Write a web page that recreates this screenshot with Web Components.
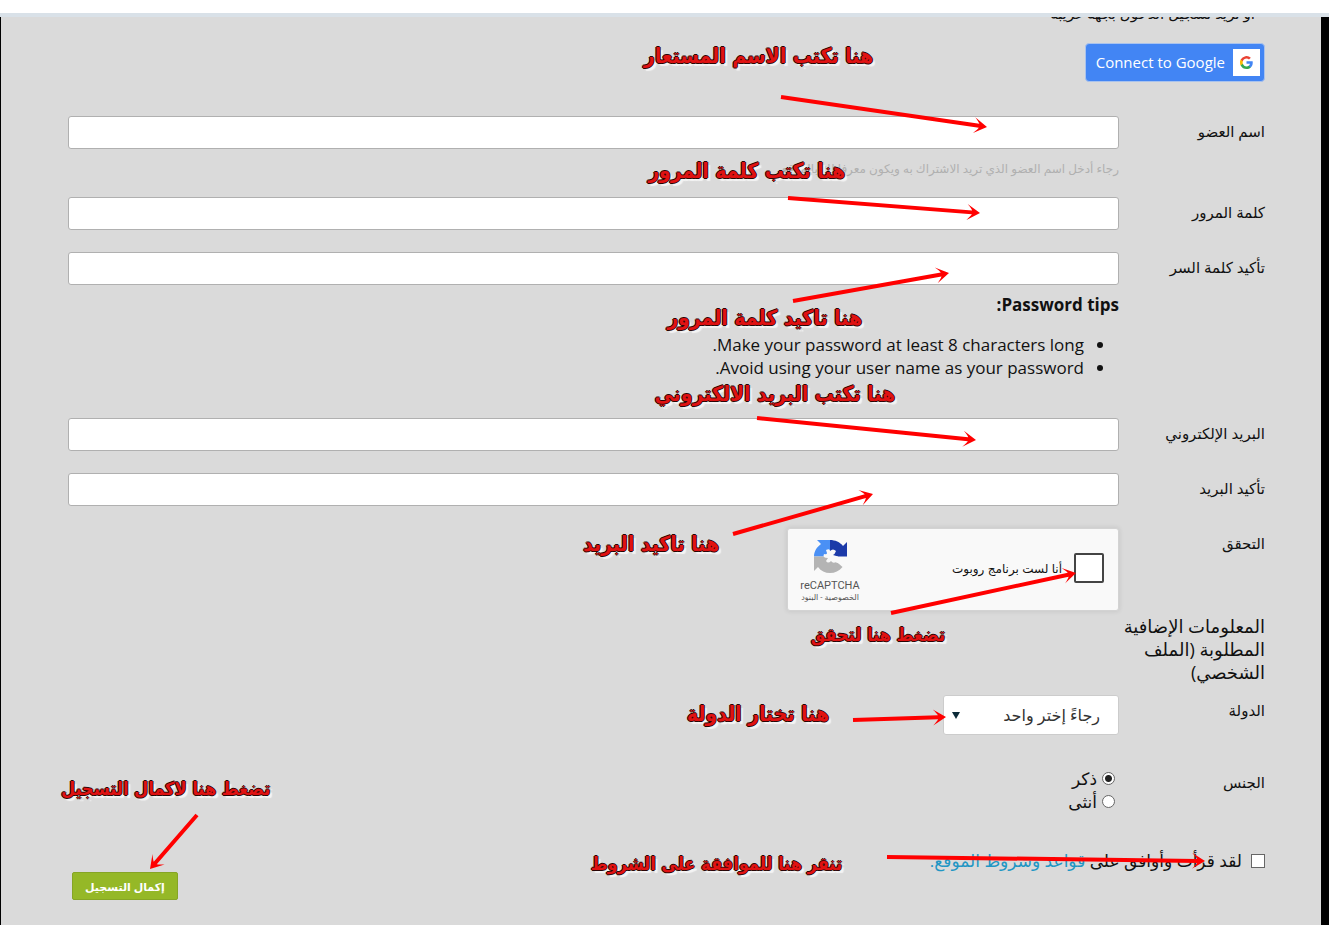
<!DOCTYPE html>
<html lang="ar" dir="rtl">
<head>
<meta charset="utf-8">
<meta name="viewport" content="width=device-width, initial-scale=1">
<title>التسجيل</title>
<style>
    body {
        margin: 0;
        background: white;
        color: #111;
        font-family: "Open Sans", "DejaVu Sans", sans-serif;
        font-size: 17px;
        line-height: 23px;
    }
</style>
</head>
<body>
<page-frame>
    <register-form></register-form>
    <guide-layer slot="guides">
        <guide-note style="top: 42px; right: 456px">هنا تكتب الاسم المستعار</guide-note>
        <guide-note style="top: 157px; right: 484px">هنا تكتب كلمة المرور</guide-note>
        <guide-note style="top: 304px; right: 467px">هنا تاكيد كلمة المرور</guide-note>
        <guide-note style="top: 380px; right: 434px">هنا تكتب البريد الالكتروني</guide-note>
        <guide-note style="top: 530px; right: 610px">هنا تاكيد البريد</guide-note>
        <guide-note compact style="top: 621px; right: 384px">تضغط هنا لتحقق</guide-note>
        <guide-note style="top: 700px; right: 500px">هنا تختار الدولة</guide-note>
        <guide-note compact style="top: 850px; right: 487px">تنقر هنا للموافقة على الشروط</guide-note>
        <guide-note compact style="top: 775px; left: 61px">تضغط هنا لاكمال التسجيل</guide-note>
    </guide-layer>
</page-frame>

<script>
class PageFrame extends HTMLElement {
    constructor() {
        super();
        this.attachShadow({mode: "open"}).innerHTML = `
            <style>
                :host {
                    display: flex;
                    flex-direction: column;
                    position: relative;
                    min-height: 100vh;
                    overflow: hidden;
                }

                .strip {
                    height: 13px;
                    border-bottom: 4px solid #d9e1e8;
                }

                main {
                    flex: 1;
                    background: #dadada;
                    border-left: 1px solid black;
                    border-right: 8px solid black;
                }
            </style>
            <div class="strip"></div>
            <main><slot></slot></main>
            <slot name="guides"></slot>
        `;
    }
}
customElements.define("page-frame", PageFrame);

class FormRow extends HTMLElement {
    constructor() {
        super();
        this.attachShadow({mode: "open"}).innerHTML = `
            <style>
                :host {
                    display: grid;
                    grid-template-columns: 146px minmax(0, 1fr);
                    align-items: start;
                    margin-bottom: 22px;
                }

                .label {
                    font-size: 15px;
                    line-height: 31px;
                }
            </style>
            <div class="label"><slot name="label"></slot></div>
            <div><slot></slot></div>
        `;
    }
}
customElements.define("form-row", FormRow);

class GoogleButton extends HTMLElement {
    constructor() {
        super();
        this.attachShadow({mode: "open"}).innerHTML = `
            <style>
                :host {
                    display: inline-flex;
                }

                button {
                    display: flex;
                    align-items: center;
                    gap: 8px;
                    height: 39px;
                    padding: 0 4px 0 10px;
                    border: 1px solid #a9c3ee;
                    border-radius: 4px;
                    background: #4285f4;
                    color: white;
                    font: inherit;
                    font-size: 15px;
                    cursor: pointer;
                }

                .logo {
                    display: grid;
                    place-items: center;
                    width: 27px;
                    height: 27px;
                    background: white;
                }
            </style>
            <button type="button">
                <span class="logo">
                    <svg width="13" height="13" viewBox="0 0 18 18" aria-hidden="true">
                        <path fill="#4285f4" d="M17.64 9.2c0-.64-.06-1.25-.16-1.84H9v3.48h4.84a4.14 4.14 0 0 1-1.8 2.72v2.26h2.92c1.7-1.57 2.68-3.88 2.68-6.62z"/>
                        <path fill="#34a853" d="M9 18c2.43 0 4.47-.8 5.96-2.18l-2.92-2.26c-.8.54-1.84.86-3.04.86-2.34 0-4.33-1.58-5.04-3.71H.96v2.33A9 9 0 0 0 9 18z"/>
                        <path fill="#fbbc05" d="M3.96 10.71a5.4 5.4 0 0 1 0-3.42V4.96H.96a9 9 0 0 0 0 8.08l3-2.33z"/>
                        <path fill="#ea4335" d="M9 3.58c1.32 0 2.5.45 3.44 1.35l2.58-2.59A9 9 0 0 0 .96 4.96l3 2.33C4.67 5.16 6.66 3.58 9 3.58z"/>
                    </svg>
                </span>
                <slot></slot>
            </button>
        `;
    }
}
customElements.define("google-button", GoogleButton);

class RobotCheck extends HTMLElement {
    constructor() {
        super();
        this.attachShadow({mode: "open"}).innerHTML = `
            <style>
                :host {
                    display: flex;
                    align-items: center;
                    box-sizing: border-box;
                    width: 332px;
                    max-width: 100%;
                    height: 83px;
                    padding: 0 14px 0 12px;
                    border: 1px solid #d3d3d3;
                    border-radius: 3px;
                    background: #f9f9f9;
                    box-shadow: 0 0 4px 1px rgba(0,0,0,0.08);
                }

                input {
                    appearance: none;
                    width: 30px;
                    height: 30px;
                    margin: 0 0 4px 12px;
                    border: 2px solid #444;
                    border-radius: 2px;
                    background: white;
                }

                label {
                    flex: 1;
                    font-family: "Liberation Sans", "DejaVu Sans", sans-serif;
                    font-size: 12px;
                }

                .brand {
                    display: flex;
                    flex-direction: column;
                    align-items: center;
                    width: 60px;
                    padding-top: 4px;
                    font-family: Roboto, "DejaVu Sans", sans-serif;
                    font-size: 11px;
                    line-height: 12px;
                    color: #555;
                }

                svg {
                    margin-bottom: 7px;
                }

                small {
                    font-size: 8px;
                    white-space: nowrap;
                }
            </style>
            <input type="checkbox" id="robot">
            <label for="robot">أنا لست برنامج روبوت</label>
            <div class="brand">
                <svg width="33" height="33" viewBox="0 0 33 33" aria-hidden="true">
                    <path fill="#4a90f5" d="M16 0H3l4 4C3 7 0 11 0 16.500H16z"/>
                    <path fill="#1c3aa9" d="M16 0C21 0 26 2 29 6l4-4V16.500H16z"/>
                    <path fill="#b4b4b4" d="M0 16.500H15L18 21 24 23 28.500 27C25 31 21 33 16 33 11 33 7 31 4 27L0 31z"/>
                    <path fill="#f9f9f9" d="M12 10Q16 8 16 11Q19 8 22 11Q21 14 19 15L24 16.500 26 24 22 22Q19 24 17 21Q14 24 12 21L14 18Q8 18 10 14Q13 15 13 13z"/>
                </svg>
                <span>reCAPTCHA</span>
                <small>الخصوصية - البنود</small>
            </div>
        `;
    }
}
customElements.define("robot-check", RobotCheck);

class RegisterForm extends HTMLElement {
    constructor() {
        super();
        this.attachShadow({mode: "open"}).innerHTML = `
            <style>
                :host {
                    display: block;
                    padding: 0 56px 24px 67px;
                }

                /* Last line of the intro, scrolled under the top strip */
                .intro {
                    display: flex;
                    align-items: flex-end;
                    height: 6px;
                    margin: 0 10px 20px;
                    overflow: hidden;
                    font-size: 15px;
                    line-height: 20px;
                }

                google-button {
                    margin-bottom: 34px;
                }

                input[type="text"],
                input[type="password"],
                input[type="email"] {
                    display: block;
                    box-sizing: border-box;
                    width: 100%;
                    height: 33px;
                    padding: 0 8px;
                    border: 1px solid #b0b0b0;
                    border-radius: 3px;
                    background: white;
                    font: inherit;
                }

                .hint {
                    margin: 8px 0 0;
                    height: 18px;
                    font-size: 12px;
                    color: #b0b0b0;
                }

                .tips {
                    padding-top: 8px;
                    margin-bottom: 17px;
                }

                ul {
                    margin: 17px 0 0;
                    padding: 0 35px 0 0;
                }

                .captcha {
                    margin-bottom: 4px;
                }

                h2 {
                    width: 146px;
                    margin: 0 0 11px;
                    font-size: 18px;
                    font-weight: 400;
                }

                .select {
                    display: block;
                    position: relative;
                    width: 176px;
                    margin-bottom: 32px;
                }

                select {
                    appearance: none;
                    width: 100%;
                    height: 40px;
                    padding: 0 18px;
                    border: 1px solid #ccc;
                    border-radius: 3px;
                    background: white;
                    color: #333;
                    font: inherit;
                    font-size: 16px;
                }

                .select svg {
                    position: absolute;
                    left: 9px;
                    top: 17px;
                }

                .choice {
                    display: flex;
                    align-items: center;
                    gap: 5px;
                }

                .choice input {
                    appearance: none;
                    width: 13px;
                    height: 13px;
                    margin: 0 4px 0 0;
                    border: 1px solid #666;
                    background: white;
                }

                .choice input[type="radio"] {
                    border-radius: 50%;
                }

                .choice input[type="radio"]:checked {
                    background: radial-gradient(circle, #222 3px, white 4px);
                }

                .gender {
                    margin-bottom: 36px;
                }

                .choice.terms {
                    gap: 9px;
                }

                .choice.terms input {
                    width: 14px;
                    height: 14px;
                    margin: 0;
                }

                a {
                    color: #2196c4;
                    text-decoration: none;
                }

                .actions {
                    display: flex;
                    justify-content: flex-end;
                    padding-left: 4px;
                }

                .submit {
                    height: 28px;
                    padding: 0 12px;
                    border: 1px solid #86a525;
                    border-radius: 2px;
                    background: #95b827;
                    color: white;
                    font: inherit;
                    font-size: 11px;
                    font-weight: 700;
                    cursor: pointer;
                }
            </style>
            <div class="intro">او تريد تسجيل الدخول بجهة غريبة</div>
            <google-button>Connect to Google</google-button>
            <form-row>
                <label slot="label" for="username">اسم العضو</label>
                <input type="text" id="username">
                <p class="hint">رجاء أدخل اسم العضو الذي تريد الاشتراك به ويكون معرفا لك بالموقع.</p>
            </form-row>
            <form-row>
                <label slot="label" for="password">كلمة المرور</label>
                <input type="password" id="password">
            </form-row>
            <form-row>
                <label slot="label" for="password2">تأكيد كلمة السر</label>
                <input type="password" id="password2">
                <div class="tips">
                    <strong>Password tips:</strong>
                    <ul>
                        <li>Make your password at least 8 characters long.</li>
                        <li>Avoid using your user name as your password.</li>
                    </ul>
                </div>
            </form-row>
            <form-row>
                <label slot="label" for="email">البريد الإلكتروني</label>
                <input type="email" id="email">
            </form-row>
            <form-row>
                <label slot="label" for="email2">تأكيد البريد</label>
                <input type="email" id="email2">
            </form-row>
            <form-row class="captcha">
                <span slot="label">التحقق</span>
                <robot-check></robot-check>
            </form-row>
            <h2>المعلومات الإضافية المطلوبة (الملف الشخصي)</h2>
            <form-row style="margin: 0">
                <label slot="label" for="country">الدولة</label>
                <span class="select">
                    <select id="country"><option>رجاءً إختر واحد</option></select>
                    <svg width="8" height="7" aria-hidden="true"><path d="M0 0h8l-4 7z" fill="#0b2a38"/></svg>
                </span>
            </form-row>
            <form-row class="gender">
                <span slot="label">الجنس</span>
                <label class="choice"><input type="radio" name="gender" checked>ذكر</label>
                <label class="choice"><input type="radio" name="gender">أنثى</label>
            </form-row>
            <div class="choice terms">
                <input type="checkbox" id="terms">
                <span><label for="terms">لقد قرأت وأوافق على</label> <a href="#terms">قواعد وشروط الموقع.</a></span>
            </div>
            <div class="actions"><button type="submit" class="submit">إكمال التسجيل</button></div>
        `;
    }
}
customElements.define("register-form", RegisterForm);

class GuideNote extends HTMLElement {
    constructor() {
        super();
        this.attachShadow({mode: "open"}).innerHTML = `
            <style>
                :host {
                    position: absolute;
                    white-space: nowrap;
                    font: bold 21px/28px "DejaVu Sans Condensed", "DejaVu Sans", sans-serif;
                    color: #e01212;
                    text-shadow:
                        1px 0 #2a0505, -1px 0 #2a0505,
                        0 1px #2a0505, 0 -1px #2a0505,
                        3px 3px 1px #f4f4f4;
                }

                :host([compact]) {
                    font-size: 18px;
                }
            </style>
            <slot></slot>
        `;
    }
}
customElements.define("guide-note", GuideNote);

// Tail and tip of each arrow: x1, y1, x2, y2
const RIGHT_ARROWS = [
    [781, 97, 987, 127],
    [788, 198, 980, 213],
    [793, 301, 949, 273],
    [757, 418, 976, 440],
    [733, 534, 873, 494],
    [891, 613, 1076, 573],
    [853, 720, 946, 717],
    [887, 857, 1205, 861]
];
const LEFT_ARROWS = [[197, 815, 150, 869]];

class GuideLayer extends HTMLElement {
    constructor() {
        super();
        this.attachShadow({mode: "open"}).innerHTML = `
            <style>
                :host {
                    position: absolute;
                    inset: 0;
                    pointer-events: none;
                }

                svg {
                    position: absolute;
                    top: 0;
                }

                .right {
                    right: 0;
                }

                .left {
                    left: 0;
                }
            </style>
            <svg class="right" width="1329" height="925" fill="#f00" aria-hidden="true">${RIGHT_ARROWS.map(this.arrow).join("")}</svg>
            <svg class="left" width="300" height="925" fill="#f00" aria-hidden="true">${LEFT_ARROWS.map(this.arrow).join("")}</svg>
            <slot></slot>
        `;
    }

    arrow([x1, y1, x2, y2]) {
        const length = Math.hypot(x2 - x1, y2 - y1);
        const angle = Math.atan2(y2 - y1, x2 - x1) * 180 / Math.PI;
        return `<path transform="translate(${x2} ${y2}) rotate(${angle})" d="M${-length} -2H-8Q-9 -4 -13 -8L0 0L-13 8Q-9 4 -8 2H${-length}z"/>`;
    }
}
customElements.define("guide-layer", GuideLayer);
</script>
</body>
</html>
